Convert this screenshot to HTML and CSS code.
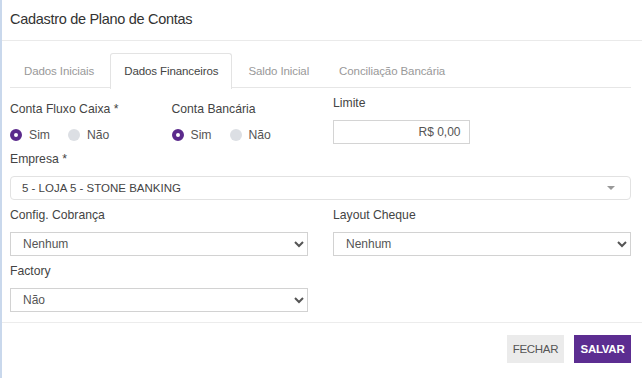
FILE: index.html
```html
<!DOCTYPE html>
<html lang="pt-BR">
<head>
	<meta charset="UTF-8">
	<title>Cadastro de Plano de Contas</title>
	<link rel="stylesheet" href="styles.css">
</head>
<body>
	<div class="modal">
		<div class="modal-header">
			<h4 class="modal-title">Cadastro de Plano de Contas</h4>
		</div>

		<div class="modal-body">
			<ul class="tabs">
				<li>Dados Iniciais</li>
				<li class="active">Dados Financeiros</li>
				<li>Saldo Inicial</li>
				<li>Conciliação Bancária</li>
			</ul>

			<div class="grid">
				<div class="group group-radio">
					<label class="lbl">Conta Fluxo Caixa *</label>
					<div class="radios">
						<span class="radio checked"></span><span class="radio-text">Sim</span>
						<span class="radio"></span><span class="radio-text">Não</span>
					</div>
				</div>
				<div class="group group-radio">
					<label class="lbl">Conta Bancária</label>
					<div class="radios">
						<span class="radio checked"></span><span class="radio-text">Sim</span>
						<span class="radio"></span><span class="radio-text">Não</span>
					</div>
				</div>
				<div class="group">
					<label class="lbl">Limite</label>
					<input class="input money" type="text" value="R$ 0,00">
				</div>

				<div class="group full">
					<label class="lbl">Empresa *</label>
					<div class="select2">
						<span>5 - LOJA 5 - STONE BANKING</span>
						<span class="caret"></span>
					</div>
				</div>

				<div class="group half">
					<label class="lbl">Config. Cobrança</label>
					<select class="select"><option>Nenhum</option></select>
				</div>
				<div class="group half">
					<label class="lbl">Layout Cheque</label>
					<select class="select"><option>Nenhum</option></select>
				</div>

				<div class="group half">
					<label class="lbl">Factory</label>
					<select class="select"><option>Não</option></select>
				</div>
			</div>
		</div>

		<div class="modal-footer">
			<button class="btn btn-default">FECHAR</button>
			<button class="btn btn-primary">SALVAR</button>
		</div>
	</div>
</body>
</html>
```

FILE: styles.css
```css
*{
	margin: 0;
	padding: 0;
	box-sizing: border-box;
}
body{
	background: #fff;
	font-family: "Liberation Sans", Arial, sans-serif;
	color: #444;
}
.modal{
	width: 642px;
	height: 378px;
	border-left: 2px solid #c9d8ec;
	background: #fff;
}
.modal-header{
	height: 41px;
	padding: 11px 8px 0;
	border-bottom: 1px solid #eaeaea;
}
.modal-title{
	font-size: 14.5px;
	font-weight: normal;
	color: #333;
	letter-spacing: -0.3px;
}
.modal-body{
	padding: 12px 11px 0 8px;
	height: 281px;
}
.tabs{
	list-style: none;
	display: flex;
	border-bottom: 1px solid #e6e6e6;
	height: 35px;
}
.tabs li{
	padding: 0 13px;
	margin-right: 2px;
	line-height: 35px;
	font-size: 11.5px;
	letter-spacing: -0.1px;
	color: #999;
	border: 1px solid transparent;
	border-bottom: none;
	border-radius: 3px 3px 0 0;
}
.tabs li.active{
	color: #444;
	background: #fff;
	border-color: #e3e3e3;
	height: 36px;
}
.grid{
	display: grid;
	grid-template-columns: repeat(4, 1fr);
	column-gap: 25px;
	padding-top: 6px;
}
.group{
	margin-bottom: 6px;
}
.full{
	grid-column: span 4;
}
.half{
	grid-column: span 2;
}
.lbl{
	display: block;
	font-size: 12.2px;
	line-height: 18px;
	color: #444;
	margin-bottom: 8px;
}
.group-radio .lbl{
	margin-top: 6px;
	margin-bottom: 8px;
}
.radios{
	display: flex;
	align-items: center;
	height: 18px;
}
.radio{
	display: inline-block;
	width: 12px;
	height: 12px;
	border-radius: 50%;
	background: #dcdfe4;
}
.radio.checked{
	background: #fff;
	border: 4px solid #5b2a8c;
}
.radio-text{
	font-size: 12.2px;
	color: #555;
	margin-left: 7px;
	margin-right: 18px;
}
.input{
	display: block;
	width: 100%;
	height: 24px;
	border: 1px solid #d4d4d4;
	padding: 0 8px;
	font-family: inherit;
	font-size: 12px;
	color: #555;
}
.money{
	text-align: right;
}
.select2{
	display: flex;
	align-items: center;
	justify-content: space-between;
	height: 24px;
	border: 1px solid #e2e2e2;
	border-radius: 4px;
	padding: 0 15px 0 11px;
	font-size: 11.5px;
	color: #444;
}
.caret{
	width: 0;
	height: 0;
	border-left: 4px solid transparent;
	border-right: 4px solid transparent;
	border-top: 4px solid #999;
}
.select{
	display: block;
	width: 100%;
	height: 24px;
	border: 1px solid #d2d2d2;
	border-radius: 0;
	background: #fff;
	padding: 0 8px;
	font-family: inherit;
	font-size: 12px;
	color: #555;
}
.modal-footer{
	border-top: 1px solid #ececec;
	display: flex;
	justify-content: flex-end;
	gap: 10px;
	padding: 12px 11px 0 0;
}
.btn{
	height: 28px;
	width: 57px;
	border: none;
	font-family: inherit;
	font-size: 11.5px;
	letter-spacing: -0.3px;
}
.btn-default{
	background: #ebebeb;
	color: #555;
}
.btn-primary{
	background: #5c2d91;
	color: #fff;
	font-weight: bold;
}
```
